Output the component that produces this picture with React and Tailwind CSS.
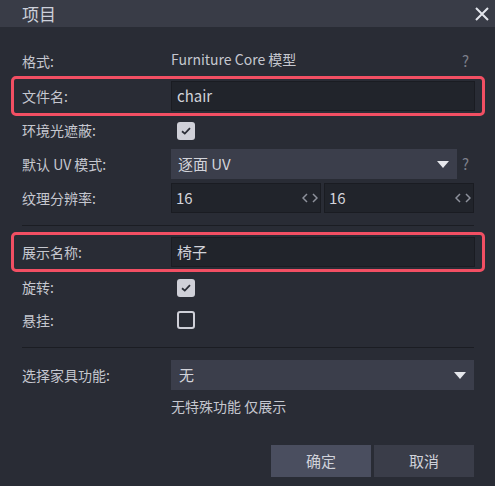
import { useState } from 'react';

const FONT = { fontFamily: "'Noto Sans CJK SC', 'Noto Sans', sans-serif" };

const Label = ({ children }) => (
  <div className="w-[149px] shrink-0 text-[14px] text-[#c5c7cf]">{children}</div>
);

const Help = () => <div className="w-[17px] shrink-0 pl-[5px] text-[15px] text-[#7c7f8a]">?</div>;

const Checkbox = ({ checked }) =>
  checked ? (
    <div className="ml-[6px] flex h-[18px] w-[18px] items-center justify-center rounded-[3px] bg-[#cfd0d8]">
      <svg width="10" height="8" viewBox="0 0 10 8">
        <path d="M1 4.2 L3.8 6.6 L9 1.2" fill="none" stroke="#2a2d36" strokeWidth="1.8" />
      </svg>
    </div>
  ) : (
    <div className="ml-[6px] h-[18px] w-[18px] rounded-[3px] border-2 border-[#cfd0d8]" />
  );

const Arrow = () => (
  <svg width="12" height="7" viewBox="0 0 12 7">
    <path d="M0 0 H12 L6 7 Z" fill="#e6e7ec" />
  </svg>
);

const Spin = () => (
  <svg width="16" height="10" viewBox="0 0 16 10">
    <path d="M5 1 L1 5 L5 9 M11 1 L15 5 L11 9" fill="none" stroke="#8e919c" strokeWidth="1.5" />
  </svg>
);

// 高亮框：红色边框包裹一整行
const Highlight = ({ children }) => (
  <div className="-mx-[11px] flex items-center rounded-[5px] border-[3px] border-[#f24f63] py-[2px] pl-[8px] pr-[7px]">
    {children}
  </div>
);

const TextInput = ({ value }) => (
  <div className="flex h-[30px] flex-1 items-center border border-[#1a1c22] bg-[#21242b] px-[5px] text-[15px] text-[#d2d3da]">
    {value}
  </div>
);

export default function App() {
  const [name] = useState('chair');

  return (
    <div style={FONT} className="flex h-[486px] w-[495px] flex-col bg-[#292c35]">
      {/* 标题栏 */}
      <div className="flex h-[27px] shrink-0 items-center justify-between bg-[#393c47] pl-[22px] pr-[6px]">
        <span className="text-[17px] text-[#cdd0da]">项目</span>
        <svg width="14" height="14" viewBox="0 0 14 14">
          <path d="M1 1 L13 13 M13 1 L1 13" stroke="#e3e5ec" strokeWidth="2" />
        </svg>
      </div>

      <div className="flex flex-col pl-[22px] pr-[21px] pt-[19px]">
        <div className="flex h-[30px] items-center">
          <Label>格式:</Label>
          <div className="flex-1 -mt-[3px] text-[14px] text-[#c5c7cf]">Furniture Core 模型</div>
          <Help />
        </div>

        <Highlight>
          <Label>文件名:</Label>
          <TextInput value={name} />
        </Highlight>

        <div className="flex h-[29px] items-center">
          <Label>环境光遮蔽:</Label>
          <Checkbox checked />
        </div>

        <div className="mt-[4px] flex h-[30px] items-center">
          <Label>默认 UV 模式:</Label>
          <div className="flex h-[30px] flex-1 items-center justify-between bg-[#3b3e4b] pl-[7px] pr-[8px] text-[15px] text-[#d2d3da]">
            <span>逐面 UV</span>
            <Arrow />
          </div>
          <Help />
        </div>

        <div className="mt-[4px] flex h-[30px] items-center">
          <Label>纹理分辨率:</Label>
          <div className="flex flex-1 gap-[3px]">
            {[16, 16].map((v, i) => (
              <div
                key={i}
                className="flex h-[30px] flex-1 items-center justify-between border border-[#1a1c22] bg-[#21242b] pl-[4px] pr-[2px] text-[15px] text-[#d2d3da]"
              >
                <span>{v}</span>
                <Spin />
              </div>
            ))}
          </div>
        </div>

        <div className="mt-[12px] h-px bg-[#1b1d23]" />

        <div className="mt-[6px]">
          <Highlight>
            <Label>展示名称:</Label>
            <TextInput value="椅子" />
          </Highlight>
        </div>

        <div className="flex h-[31px] items-center">
          <Label>旋转:</Label>
          <Checkbox checked />
        </div>
        <div className="flex h-[34px] items-center">
          <Label>悬挂:</Label>
          <Checkbox checked={false} />
        </div>

        <div className="mt-[10px] h-px bg-[#1b1d23]" />

        <div className="mt-[12px] flex h-[30px] items-center">
          <Label>选择家具功能:</Label>
          <div className="flex h-[30px] flex-1 items-center justify-between bg-[#3b3e4b] pl-[8px] pr-[8px] text-[15px] text-[#d2d3da]">
            <span>无</span>
            <Arrow />
          </div>
        </div>
        <div className="mt-[6px] pl-[149px] text-[14px] text-[#c5c7cf]">无特殊功能 仅展示</div>

        <div className="mt-[28px] flex justify-end gap-[3px]">
          <button className="h-[32px] w-[100px] bg-[#4a4e5f] text-[15px] text-[#d0d2da]">确定</button>
          <button className="h-[32px] w-[100px] bg-[#3a3d49] text-[15px] text-[#d0d2da]">取消</button>
        </div>
      </div>
    </div>
  );
}
